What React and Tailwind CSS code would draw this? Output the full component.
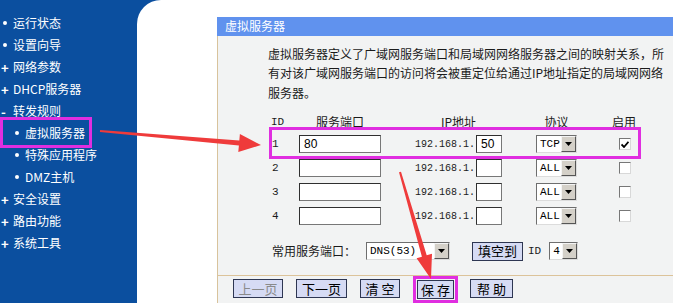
import React from 'react';

const menu = [
    { mark: 'dot', label: '运行状态' },
    { mark: 'dot', label: '设置向导' },
    { mark: 'plus', label: '网络参数' },
    { mark: 'plus', label: 'DHCP服务器' },
    { mark: 'minus', label: '转发规则' },
    { mark: 'sub', label: '虚拟服务器', active: true },
    { mark: 'sub', label: '特殊应用程序' },
    { mark: 'sub', label: 'DMZ主机' },
    { mark: 'plus', label: '安全设置' },
    { mark: 'plus', label: '路由功能' },
    { mark: 'plus', label: '系统工具' },
];

const rows = [
    { id: 1, port: '80', ip: '50', proto: 'TCP', on: true },
    { id: 2, port: '', ip: '', proto: 'ALL', on: false },
    { id: 3, port: '', ip: '', proto: 'ALL', on: false },
    { id: 4, port: '', ip: '', proto: 'ALL', on: false },
];

function Mark({ type }) {
    if (type === 'plus') return <span className="w-[12px] text-[13px] font-bold leading-none">+</span>;
    if (type === 'minus') return <span className="w-[12px] text-[13px] font-bold leading-none">-</span>;
    return (
        <span className="w-[12px] flex items-center">
            <span className="ml-[2px] w-[4px] h-[4px] rounded-full bg-white"></span>
        </span>
    );
}

function Sidebar() {
    return (
        <div className="w-[137px] shrink-0 pt-[12px] text-white text-[12px]">
            {menu.map((m) => (
                <div key={m.label} className={`h-[22px] flex items-center ${m.mark === 'sub' ? 'pl-[13px]' : 'pl-[1px]'}`}>
                    <div className="relative flex items-center">
                        <Mark type={m.mark} />
                        <span>{m.label}</span>
                        {m.active && (
                            <span className="absolute left-[-13px] right-[-7px] top-[-7px] bottom-[-6px] border-[3px] border-[#e02ee0]"></span>
                        )}
                    </div>
                </div>
            ))}
        </div>
    );
}

function Select({ value, w }) {
    return (
        <div className={`flex h-[18px] bg-white border border-t-[#6e6e6e] border-l-[#6e6e6e] border-r-[#dcdcdc] border-b-[#dcdcdc] ${w}`}>
            <span className="flex-1 pl-[3px] font-['Liberation_Mono',monospace] text-[11px] leading-[16px] text-black">{value}</span>
            <span className="w-[15px] h-[16px] bg-[#d4d0c8] border border-t-[#f4f4f4] border-l-[#f4f4f4] border-r-[#555] border-b-[#555] flex items-center justify-center">
                <svg width="7" height="4" viewBox="0 0 7 4"><polygon points="0,0 7,0 3.5,4" fill="#000" /></svg>
            </span>
        </div>
    );
}

function Input({ value, w }) {
    return (
        <div className={`h-[18px] bg-white border border-[#777] border-t-[#2f2f2f] border-l-[#2f2f2f] pl-[4px] text-[12px] leading-[16px] text-black font-['Liberation_Sans',sans-serif] ${w}`}>
            {value}
        </div>
    );
}

function Check({ on }) {
    return (
        <div className="w-[12px] h-[12px] bg-white border border-t-[#777] border-l-[#777] border-r-[#d8d8d8] border-b-[#d8d8d8] flex items-center justify-center">
            {on && (
                <svg width="8" height="7" viewBox="0 0 8 7"><path d="M0.5 3.5 L3 6 L7.5 0.8" stroke="#000" strokeWidth="1.8" fill="none" /></svg>
            )}
        </div>
    );
}

function Btn({ children, w, dim }) {
    return (
        <div className={`h-[19px] bg-[#d6dbf4] border border-[#2e3652] flex items-center justify-center text-[13px] ${dim ? 'text-[#8a8a8a]' : 'text-black'} ${w}`}>
            {children}
        </div>
    );
}

export default function App() {
    return (
        <div className="relative w-[677px] h-[303px] overflow-hidden bg-[#0b4f9f] flex font-['Noto_Sans_CJK_SC',sans-serif]">
            <Sidebar />

            <div className="flex-1 bg-white rounded-tl-[24px] pl-[80px] pt-[17px]">
                <div className="w-[456px] h-full flex flex-col">
                    {/* Title bar */}
                    <div className="h-[23px] bg-[#6092ee] text-white text-[12px] flex items-center pl-[8px]">虚拟服务器</div>

                    <div className="flex-1 bg-[#f2f3f3] border-l border-[#d8c39c] text-[12px] text-[#1b1b1b]">
                        <p className="pl-[50px] pt-[8px] leading-[19.5px]">
                            虚拟服务器定义了广域网服务端口和局域网网络服务器之间的映射关系，所<br />
                            有对该广域网服务端口的访问将会被重定位给通过IP地址指定的局域网网络<br />
                            服务器。
                        </p>

                        {/* Table */}
                        <div className="pl-[53px] mt-[10px]">
                            <div className="grid grid-cols-[28px_82px_155px_41px_94px] h-[20px] items-center">
                                <span className="font-['Liberation_Mono',monospace] text-[11px]">ID</span>
                                <span className="text-center">服务端口</span>
                                <span className="text-center">IP地址</span>
                                <span className="text-center">协议</span>
                                <span className="text-center">启用</span>
                            </div>
                            {rows.map((r) => (
                                <div key={r.id} className="relative grid grid-cols-[28px_82px_155px_41px_94px] h-[24px] items-center">
                                    <span className="font-['Liberation_Mono',monospace] text-[11px] pl-[1px]">{r.id}</span>
                                    <Input value={r.port} w="w-[82px]" />
                                    <div className="flex items-center justify-end pr-[34px]">
                                        <span className="font-['Liberation_Mono',monospace] text-[10px] mr-[1px]">192.168.1.</span>
                                        <Input value={r.ip} w="w-[26px]" />
                                    </div>
                                    <Select value={r.proto} w="w-[41px]" />
                                    <div className="flex justify-center pl-[2px]">
                                        <Check on={r.on} />
                                    </div>
                                    {r.on && (
                                        <span className="absolute left-[-2px] w-[372px] top-[-5px] bottom-[-3px] border-[3px] border-[#e02ee0]"></span>
                                    )}
                                </div>
                            ))}
                        </div>

                        {/* Common ports */}
                        <div className="pl-[54px] mt-[14px] h-[18px] flex items-center">
                            <span className="w-[94px]">常用服务端口：</span>
                            <Select value="DNS(53)" w="w-[84px]" />
                            <div className="ml-[22px]"><Btn w="w-[51px]">填空到</Btn></div>
                            <span className="ml-[5px] font-['Liberation_Mono',monospace] text-[11px]">ID</span>
                            <div className="ml-[8px]"><Select value="4" w="w-[29px]" /></div>
                        </div>

                        {/* Buttons */}
                        <div className="mt-[15px] border-t border-[#dcc39a] pt-[3px] pl-[15px] flex items-start">
                            <Btn w="w-[50px]" dim>上一页</Btn>
                            <div className="ml-[13px]"><Btn w="w-[51px]">下一页</Btn></div>
                            <div className="ml-[13px]"><Btn w="w-[40px]">清 空</Btn></div>
                            <div className="ml-[13px] mt-[-3px] border-[3px] border-[#e02ee0] p-[1px]"><Btn w="w-[37px]">保 存</Btn></div>
                            <div className="ml-[12px]"><Btn w="w-[43px]">帮 助</Btn></div>
                        </div>
                    </div>
                </div>
            </div>

            {/* Annotation arrows */}
            <svg className="absolute inset-0 pointer-events-none" width="677" height="303" viewBox="0 0 677 303">
                <polygon points="100.1,130 239.3,140.6 239.9,134.1 261,145 238.3,152.1 238.9,145.6 99.9,132" fill="#ef3b3b" />
                <polygon points="399,172.3 421.9,256.7 416.6,258.2 431,279 432,253.8 426.7,255.3 401,171.7" fill="#ef3b3b" />
            </svg>
        </div>
    );
}
